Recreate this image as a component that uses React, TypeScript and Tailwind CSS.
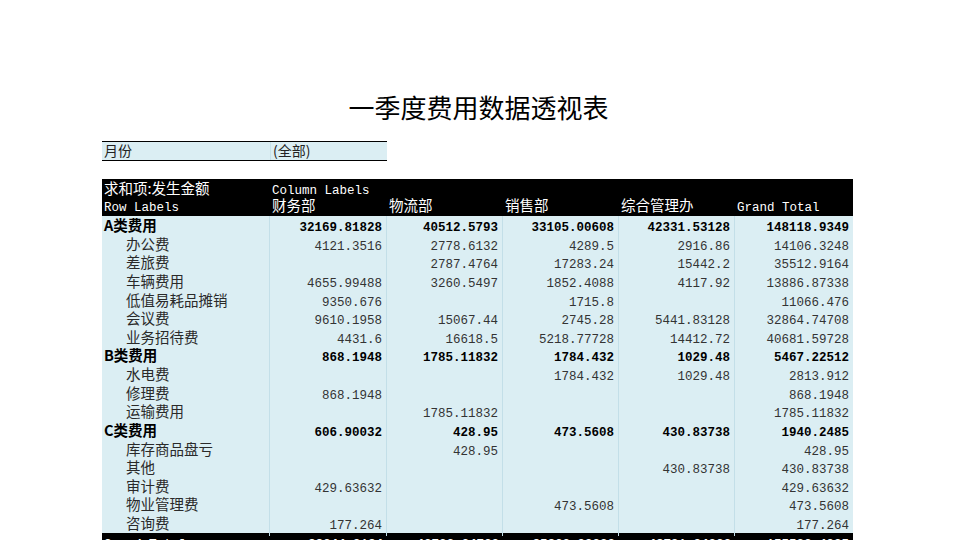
import React from "react";

type Row = {
  label: string;
  values: string[];
  bold?: boolean;
};

const rows: Row[] = [
  { label: "A类费用", bold: true, values: ["32169.81828", "40512.5793", "33105.00608", "42331.53128", "148118.9349"] },
  { label: "办公费", values: ["4121.3516", "2778.6132", "4289.5", "2916.86", "14106.3248"] },
  { label: "差旅费", values: ["", "2787.4764", "17283.24", "15442.2", "35512.9164"] },
  { label: "车辆费用", values: ["4655.99488", "3260.5497", "1852.4088", "4117.92", "13886.87338"] },
  { label: "低值易耗品摊销", values: ["9350.676", "", "1715.8", "", "11066.476"] },
  { label: "会议费", values: ["9610.1958", "15067.44", "2745.28", "5441.83128", "32864.74708"] },
  { label: "业务招待费", values: ["4431.6", "16618.5", "5218.77728", "14412.72", "40681.59728"] },
  { label: "B类费用", bold: true, values: ["868.1948", "1785.11832", "1784.432", "1029.48", "5467.22512"] },
  { label: "水电费", values: ["", "", "1784.432", "1029.48", "2813.912"] },
  { label: "修理费", values: ["868.1948", "", "", "", "868.1948"] },
  { label: "运输费用", values: ["", "1785.11832", "", "", "1785.11832"] },
  { label: "C类费用", bold: true, values: ["606.90032", "428.95", "473.5608", "430.83738", "1940.2485"] },
  { label: "库存商品盘亏", values: ["", "428.95", "", "", "428.95"] },
  { label: "其他", values: ["", "", "", "430.83738", "430.83738"] },
  { label: "审计费", values: ["429.63632", "", "", "", "429.63632"] },
  { label: "物业管理费", values: ["", "", "473.5608", "", "473.5608"] },
  { label: "咨询费", values: ["177.264", "", "", "", "177.264"] },
];

const totals = ["33644.9134", "42726.64762", "35362.99888", "43791.84866", "155526.4085"];
const depts = ["财务部", "物流部", "销售部", "综合管理办", "Grand Total"];

const mono = "font-['Liberation_Mono','Noto_Sans_CJK_SC',monospace]";
const cjk = "font-['Noto_Sans_CJK_SC','Liberation_Sans',sans-serif]";
const cols = "grid grid-cols-[168px_117px_116px_116px_116px_118px]";

const App = () => {
  return (
    <div className="w-[960px] h-[540px] overflow-hidden bg-white">
      <div className="pt-[90px] pl-[102px] w-[855px]">
        <h1 className={`${cjk} text-[26px] leading-[34px] font-normal text-black text-center`}>
          一季度费用数据透视表
        </h1>

        {/* filter */}
        <div className="mt-[17px] w-[285px] grid grid-cols-[168px_117px] border-y border-black bg-[#dbeef3] h-[20px] text-[14px] leading-[16px] text-[#222]">
          <div className={`${cjk} pl-[2px]`}>月份</div>
          <div className={`${cjk} pl-[2px] border-l border-[#c7e2ea]`}>(全部)</div>
        </div>

        {/* pivot table */}
        <div className="mt-[18px] w-[751px]">
          <div className={`${cols} bg-black text-white h-[37px]`}>
            <div className="flex flex-col pl-[2px]">
              <span className={`${cjk} text-[14.5px] leading-[18px]`}>求和项:发生金额</span>
              <span className={`${mono} text-[12.5px] leading-[18px] pt-[2px]`}>Row Labels</span>
            </div>
            {depts.map((d, i) => (
              <div key={d} className="flex flex-col pl-[2px]">
                <span className={`${mono} text-[12.5px] leading-[18px] pt-[3px] h-[20px]`}>{i === 0 ? "Column Labels" : "\u00a0"}</span>
                <span
                  className={`${d === "Grand Total" ? mono + " text-[12.5px]" : cjk + " text-[14.5px] -mt-[3px]"} leading-[18px] whitespace-nowrap`}
                >
                  {d}
                </span>
              </div>
            ))}
          </div>

          {rows.map((r) => (
            <div key={r.label} className={`${cols} bg-[#dbeef3] h-[18.625px] leading-[18.625px]`}>
              <div
                className={`${cjk} text-[14.5px] whitespace-nowrap border-r border-[#c3dfe8] ${r.bold ? "pl-[2px] font-bold text-black" : "pl-[24px] text-[#2a2a2a]"}`}
              >
                {r.label}
              </div>
              {r.values.map((v, i) => (
                <div
                  key={i}
                  className={`${mono} text-[12.5px] text-right pr-[4px] pt-[3px] ${i < 4 ? "border-r border-[#c3dfe8]" : ""} ${r.bold ? "font-bold text-black" : "text-[#333]"}`}
                >
                  {v}
                </div>
              ))}
            </div>
          ))}

          <div className={`${cols} bg-black text-white h-[19px] leading-[19px] font-bold`}>
            <div className={`${mono} text-[12.5px] pl-[2px] pt-[3px]`}>Grand Total</div>
            {totals.map((t) => (
              <div key={t} className={`${mono} text-[12.5px] text-right pr-[4px] pt-[3px]`}>{t}</div>
            ))}
          </div>
        </div>
      </div>
    </div>
  );
};

export default App;
